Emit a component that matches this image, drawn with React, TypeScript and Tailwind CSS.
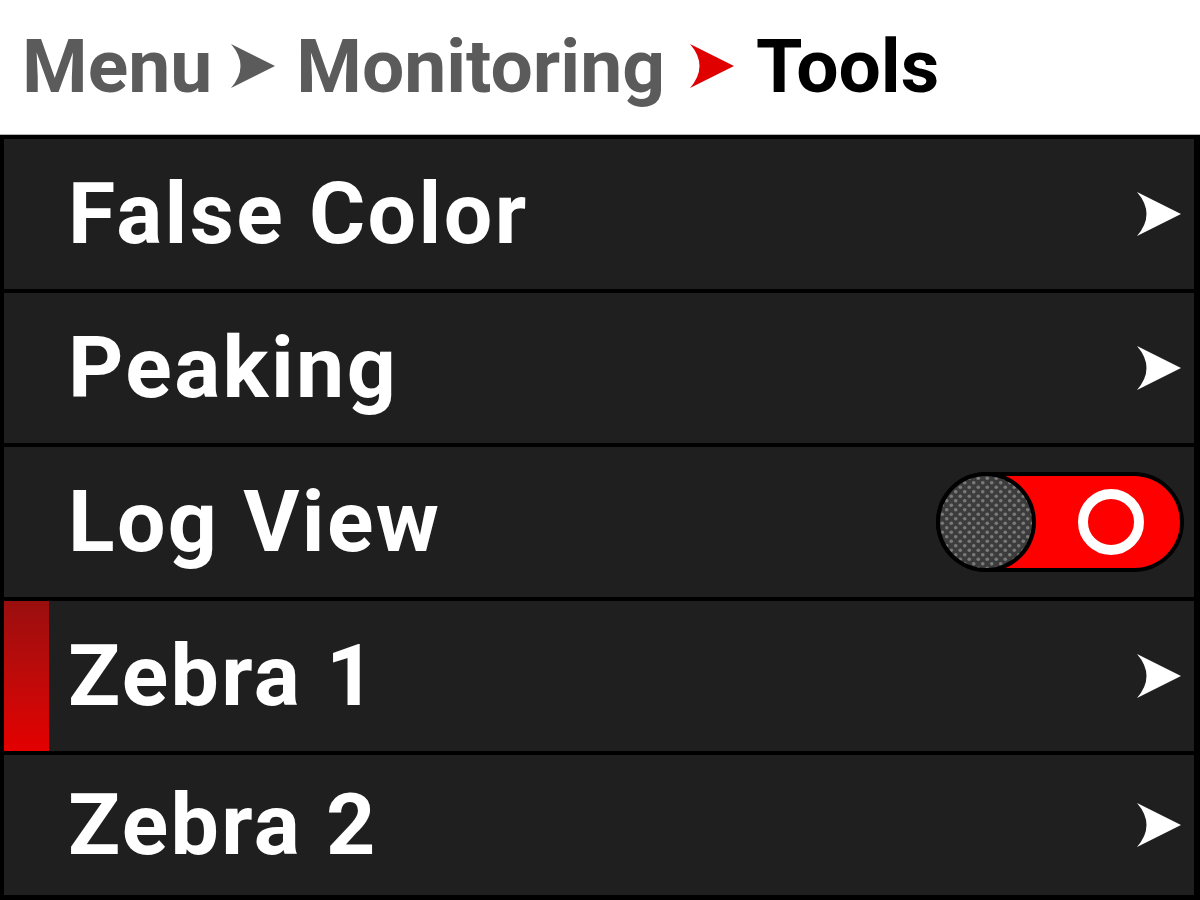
import React from 'react';

const font = { fontFamily: 'Roboto, "Liberation Sans", sans-serif' };

type Item = { label: string; kind: 'link' | 'toggle'; active?: boolean };

const items: Item[] = [
  { label: 'False Color', kind: 'link' },
  { label: 'Peaking', kind: 'link' },
  { label: 'Log View', kind: 'toggle' },
  { label: 'Zebra 1', kind: 'link', active: true },
  { label: 'Zebra 2', kind: 'link' },
];

const Arrow = ({ color, className }: { color: string; className?: string }) => (
  <svg viewBox="0 0 46 46" className={className}>
    <path d="M1 1 L45 23 L1 45 Q20 23 1 1 Z" fill={color} />
  </svg>
);

const Toggle = () => (
  <div className="relative w-[248px] h-[100px] rounded-full bg-black p-[4px]">
    <div className="h-full w-full rounded-full bg-[#ff0000] flex items-center justify-end pr-[36px]">
      <div className="w-[66px] h-[66px] rounded-full border-[10px] border-white" />
    </div>
    {/* knob */}
    <div className="absolute left-0 top-0 w-[100px] h-[100px] rounded-full bg-black p-[4px]">
      <svg viewBox="0 0 92 92" className="w-full h-full">
        <defs>
          <pattern id="dots" width="9" height="9" patternUnits="userSpaceOnUse">
            <rect width="9" height="9" fill="#3c3c3c" />
            <circle cx="2.25" cy="2.25" r="1.8" fill="#7a7a7a" />
            <circle cx="6.75" cy="6.75" r="1.8" fill="#7a7a7a" />
          </pattern>
        </defs>
        <circle cx="46" cy="46" r="46" fill="url(#dots)" />
      </svg>
    </div>
  </div>
);

export default function App() {
  return (
    <div className="w-[1200px] h-[900px] flex flex-col bg-white overflow-hidden" style={font}>
      <div className="h-[134px] flex items-center pl-[22px] pb-[2px] text-[75px] font-bold">
        <span className="text-[#5b5b5b]">Menu</span>
        <Arrow color="#5b5b5b" className="w-[46px] h-[46px] ml-[18px] mr-[20px]" />
        <span className="text-[#5b5b5b]">Monitoring</span>
        <Arrow color="#e00000" className="w-[46px] h-[46px] ml-[24px] mr-[21px]" />
        <span className="text-black">Tools</span>
      </div>
      <div className="h-[1px] bg-[#b5b5b5]" />
      <div className="flex-1 bg-black pt-[4px] pl-[4px] pr-[6px] pb-[5px] flex flex-col gap-[4px]">
        {items.map((item, i) => (
          <div
            key={item.label}
            className={`relative flex items-center bg-[#1f1f1f] pl-[64px] pr-[14px] ${i === 4 ? 'flex-1' : 'h-[150px]'}`}
          >
            {item.active && (
              <div className="absolute left-0 top-0 bottom-0 w-[45px] bg-gradient-to-b from-[#9a0e0e] to-[#e40000]" />
            )}
            <span className="text-white font-bold text-[86px] tracking-[2.4px] leading-none">{item.label}</span>
            <div className="ml-auto flex items-center">
              {item.kind === 'toggle' ? (
                <div className="-mr-[4px]"><Toggle /></div>
              ) : (
                <Arrow color="#ffffff" className="w-[46px] h-[46px] -mr-[2px]" />
              )}
            </div>
          </div>
        ))}
      </div>
    </div>
  );
}
